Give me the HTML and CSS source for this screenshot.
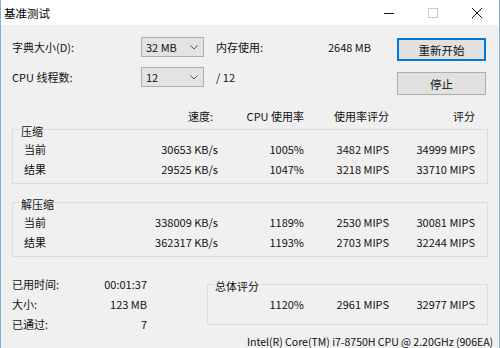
FILE: index.html
```html
<!DOCTYPE html>
<html lang="zh-CN">
<head>
  <meta charset="UTF-8">
  <title>基准测试</title>
  <link rel="stylesheet" href="styles.css">
</head>
<body>
  <div class="window">
    <div class="titlebar">
      <span class="title">基准测试</span>
      <div class="controls">
        <span class="ctl"><svg width="10" height="10" viewBox="0 0 10 10"><path d="M0 5.5h10" stroke="#111" stroke-width="1"/></svg></span>
        <span class="ctl"><svg width="10" height="10" viewBox="0 0 10 10"><rect x="0.5" y="0.5" width="9" height="9" fill="none" stroke="#c8c8c8"/></svg></span>
        <span class="ctl"><svg width="10" height="10" viewBox="0 0 10 10"><path d="M0 0L10 10M10 0L0 10" stroke="#111" stroke-width="1"/></svg></span>
      </div>
    </div>

    <div class="content">
      <div class="top">
        <div class="settings">
          <span class="lbl">字典大小(D):</span>
          <div class="combo"><span>32 MB</span><svg width="8" height="5" viewBox="0 0 8 5"><path d="M0.5 0.5L4 4L7.5 0.5" fill="none" stroke="#555"/></svg></div>
          <div class="mem"><span>内存使用:</span><span>2648 MB</span></div>

          <span class="lbl">CPU 线程数:</span>
          <div class="combo"><span>12</span><svg width="8" height="5" viewBox="0 0 8 5"><path d="M0.5 0.5L4 4L7.5 0.5" fill="none" stroke="#555"/></svg></div>
          <div class="mem"><span>/ 12</span></div>
        </div>
        <div class="buttons">
          <button class="btn default">重新开始</button>
          <button class="btn">停止</button>
        </div>
      </div>

      <div class="cols head">
        <span></span>
        <span class="num speed">速度:</span>
        <span class="num">CPU 使用率</span>
        <span class="num">使用率评分</span>
        <span class="num">评分</span>
      </div>

      <fieldset class="group">
        <legend>压缩</legend>
        <div class="cols">
          <span>当前</span><span class="num">30653 KB/s</span><span class="num">1005%</span><span class="num">3482 MIPS</span><span class="num">34999 MIPS</span>
          <span>结果</span><span class="num">29525 KB/s</span><span class="num">1047%</span><span class="num">3218 MIPS</span><span class="num">33710 MIPS</span>
        </div>
      </fieldset>

      <fieldset class="group second">
        <legend>解压缩</legend>
        <div class="cols">
          <span>当前</span><span class="num">338009 KB/s</span><span class="num">1189%</span><span class="num">2530 MIPS</span><span class="num">30081 MIPS</span>
          <span>结果</span><span class="num">362317 KB/s</span><span class="num">1193%</span><span class="num">2703 MIPS</span><span class="num">32244 MIPS</span>
        </div>
      </fieldset>

      <div class="bottom">
        <div class="stats">
          <span>已用时间:</span><span class="num">00:01:37</span>
          <span>大小:</span><span class="num">123 MB</span>
          <span>已通过:</span><span class="num">7</span>
        </div>
        <fieldset class="group total">
          <legend>总体评分</legend>
          <div class="cols short">
            <span class="num">1120%</span><span class="num">2961 MIPS</span><span class="num">32977 MIPS</span>
          </div>
        </fieldset>
      </div>

      <div class="cpu">Intel(R) Core(TM) i7-8750H CPU @ 2.20GHz (906EA)</div>
    </div>
  </div>
</body>
</html>
```

FILE: styles.css
```css
body {
  margin: 0;
  background: #f0f0f0;
  font-family: "Noto Sans CJK SC", "Microsoft YaHei", sans-serif;
  font-size: 11px;
  color: #111;
}

.window {
  width: 500px;
  height: 348px;
  box-sizing: border-box;
  border-left: 1px solid #7fb2d6;
  border-right: 1px solid #7fb2d6;
  overflow: hidden;
}

.titlebar {
  height: 25px;
  background: #fff;
  display: flex;
  align-items: center;
}

.title {
  font-size: 11.5px;
  padding-left: 3px;
  padding-top: 1px;
  color: #000;
}

.controls {
  margin-left: auto;
  display: flex;
  height: 100%;
}

.ctl {
  width: 44px;
  display: flex;
  align-items: center;
  justify-content: center;
}

.content {
  padding: 12px 11px 0;
}

/* top settings */
.top {
  display: flex;
  align-items: flex-start;
}

.settings {
  display: grid;
  grid-template-columns: 129px 63px 167px;
  grid-auto-rows: 20px;
  row-gap: 10px;
  align-items: center;
}

.combo {
  height: 20px;
  box-sizing: border-box;
  border: 1px solid #adadad;
  background: #e3e3e3;
  display: flex;
  align-items: center;
  padding: 0 5px 0 4px;
}

.combo svg {
  margin-left: auto;
}

.mem {
  display: flex;
  justify-content: space-between;
  padding-left: 12px;
}

.buttons {
  margin-left: auto;
  margin-right: 2px;
  margin-top: 1px;
  display: flex;
  flex-direction: column;
  gap: 11px;
}

.btn {
  width: 89px;
  height: 23px;
  box-sizing: border-box;
  border: 1px solid #adadad;
  background: #e1e1e1;
  font-family: inherit;
  font-size: 11.5px;
  color: #111;
  padding: 0;
}

.btn.default {
  border-color: #0078d7;
  box-shadow: inset 0 0 0 1px #0078d7;
}

/* table columns */
.cols {
  display: grid;
  grid-template-columns: 60px 134px 86px 85px 86px;
  grid-auto-rows: 20px;
  align-items: center;
}

.cols.short {
  grid-template-columns: 86px 85px 86px;
}

.num {
  text-align: right;
  white-space: nowrap;
}

.head {
  margin-top: 15px;
  padding-left: 12px;
  grid-auto-rows: 12px;
  line-height: 12px;
}

.head .speed {
  padding-right: 5px;
}

.group {
  margin: -1px 0 0;
  padding: 2px 12px 4px 11px;
  border: 1px solid #dcdcdc;
  min-width: 0;
}

.group legend {
  padding: 4px 1px 0;
  margin-left: -4px;
  line-height: 12px;
}

.group.second {
  margin-top: 10px;
}

/* bottom */
.bottom {
  display: flex;
  align-items: flex-start;
  margin-top: 17px;
}

.stats {
  width: 135px;
  display: grid;
  grid-template-columns: 1fr auto;
  grid-auto-rows: 20px;
  align-items: center;
}

.group.total {
  margin: 2px 0 0 auto;
  width: 281px;
  box-sizing: border-box;
  padding: 2px 12px 10px 10px;
}

.cpu {
  margin-top: 1px;
  padding-left: 235px;
  line-height: 14px;
  font-size: 10.6px;
  letter-spacing: -0.05px;
  white-space: nowrap;
}
```
